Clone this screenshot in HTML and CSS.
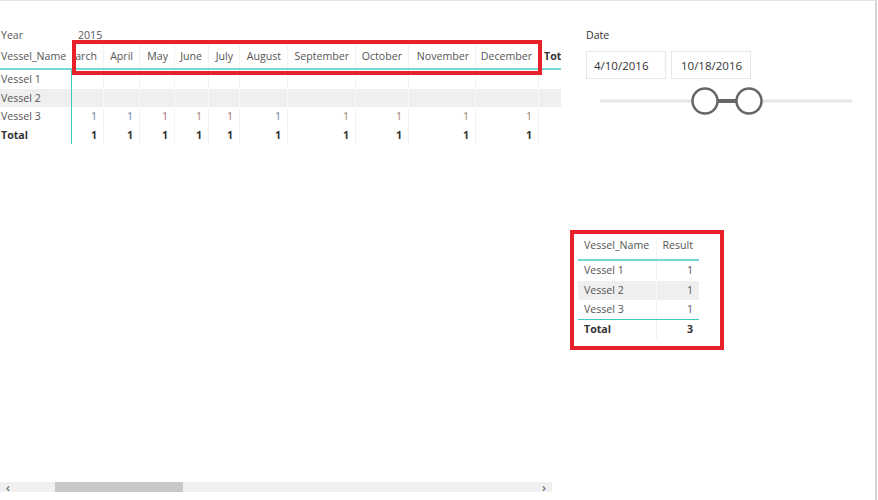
FILE: index.html
```html
<!DOCTYPE html>
<html>
<head>
<meta charset="utf-8">
<link rel="stylesheet" href="styles.css">
</head>
<body>
<div class="page">
  <div class="matrix-visual">
    <div class="matrix">
      <div class="year-row">
        <div class="c-label">Year</div>
        <div class="c-year">2015</div>
      </div>
      <div class="mrow head">
        <div class="cell label">Vessel_Name</div>
        <div class="cell num w1">March</div>
        <div class="cell num w2">April</div>
        <div class="cell num w3">May</div>
        <div class="cell num w4">June</div>
        <div class="cell num w5">July</div>
        <div class="cell num w6">August</div>
        <div class="cell num w7">September</div>
        <div class="cell num w8">October</div>
        <div class="cell num w9">November</div>
        <div class="cell num w10">December</div>
        <div class="cell tot">Total</div>
      </div>
      <div class="mrow body">
        <div class="cell label">Vessel 1</div>
        <div class="cell num w1"></div><div class="cell num w2"></div><div class="cell num w3"></div><div class="cell num w4"></div><div class="cell num w5"></div><div class="cell num w6"></div><div class="cell num w7"></div><div class="cell num w8"></div><div class="cell num w9"></div><div class="cell num w10"></div><div class="cell tot"></div>
      </div>
      <div class="mrow body alt">
        <div class="cell label">Vessel 2</div>
        <div class="cell num w1"></div><div class="cell num w2"></div><div class="cell num w3"></div><div class="cell num w4"></div><div class="cell num w5"></div><div class="cell num w6"></div><div class="cell num w7"></div><div class="cell num w8"></div><div class="cell num w9"></div><div class="cell num w10"></div><div class="cell tot"></div>
      </div>
      <div class="mrow body">
        <div class="cell label">Vessel 3</div>
        <div class="cell num w1 v-blue">1</div><div class="cell num w2 v-blue">1</div><div class="cell num w3 v-red">1</div><div class="cell num w4 v-brown">1</div><div class="cell num w5 v-red">1</div><div class="cell num w6 v-blue">1</div><div class="cell num w7 v-brown">1</div><div class="cell num w8 v-brown">1</div><div class="cell num w9 v-brown">1</div><div class="cell num w10 v-brown">1</div><div class="cell tot"></div>
      </div>
      <div class="mrow body total">
        <div class="cell label">Total</div>
        <div class="cell num w1">1</div><div class="cell num w2">1</div><div class="cell num w3">1</div><div class="cell num w4">1</div><div class="cell num w5">1</div><div class="cell num w6">1</div><div class="cell num w7">1</div><div class="cell num w8">1</div><div class="cell num w9">1</div><div class="cell num w10">1</div><div class="cell tot"></div>
      </div>
      <div class="highlight"></div>
    </div>
    <div class="hscroll">
      <span class="arrow">&lsaquo;</span>
      <div class="track"><div class="thumb"></div></div>
      <span class="arrow">&rsaquo;</span>
    </div>
  </div>

  <div class="side">
    <div class="slicer-title">Date</div>
    <div class="date-row">
      <div class="date-box">4/10/2016</div>
      <div class="date-box">10/18/2016</div>
    </div>
    <svg class="slider" width="260" height="30" viewBox="0 0 260 30">
      <line x1="4" y1="14" x2="256" y2="14" stroke="#e6e6e6" stroke-width="3"/>
      <line x1="109" y1="14" x2="153" y2="14" stroke="#666" stroke-width="4"/>
      <circle cx="109" cy="14" r="12.5" fill="#fff" stroke="#666" stroke-width="2.5"/>
      <circle cx="153" cy="14" r="12.5" fill="#fff" stroke="#666" stroke-width="2.5"/>
    </svg>

    <div class="result-box">
      <div class="rtable">
        <div class="rrow rhead"><div class="rc name">Vessel_Name</div><div class="rc val">Result</div></div>
        <div class="rrow"><div class="rc name">Vessel 1</div><div class="rc val">1</div></div>
        <div class="rrow ralt"><div class="rc name">Vessel 2</div><div class="rc val">1</div></div>
        <div class="rrow rlast"><div class="rc name">Vessel 3</div><div class="rc val">1</div></div>
        <div class="rrow rtotal"><div class="rc name">Total</div><div class="rc val">3</div></div>
      </div>
    </div>
  </div>
</div>
</body>
</html>
```

FILE: styles.css
```css
html, body {
  margin: 0;
  padding: 0;
  background: #fff;
}
body {
  font-family: "Open Sans", "Noto Sans", sans-serif;
  font-size: 10.6px;
  color: #444;
}
.page {
  width: 877px;
  height: 500px;
  box-sizing: border-box;
  border-top: 1px solid #e2e2e2;
  border-right: 2px solid #d4d4d4;
  display: flex;
  gap: 9px;
}
.matrix-visual {
  width: 561px;
  flex-shrink: 0;
  display: flex;
  flex-direction: column;
}
.matrix {
  position: relative;
  padding-top: 27px;
  width: 561px;
  overflow: hidden;
}
.year-row {
  display: flex;
  line-height: 15px;
  height: 15px;
  color: #555;
}
.c-label {
  width: 72px;
  padding-left: 1px;
  box-sizing: border-box;
}
.c-year {
  padding-left: 6px;
}
.mrow {
  display: flex;
  white-space: nowrap;
}
.cell {
  box-sizing: border-box;
  flex-shrink: 0;
  overflow: hidden;
  display: flex;
  align-items: center;
  border-right: 1px solid #f3f3f3;
}
.cell.label {
  width: 72px;
  padding-left: 1px;
  border-right: 1px solid #3ec8bf;
  color: #555;
}
.head .cell.label { border-right-color: transparent; }
.cell.num {
  justify-content: flex-end;
  padding-right: 6px;
}
.w1 { width: 32px; }
.w2 { width: 36px; }
.w3 { width: 35px; }
.w4 { width: 34px; }
.w5 { width: 31px; }
.w6 { width: 48px; }
.w7 { width: 68px; }
.w8 { width: 53px; }
.w9 { width: 67px; }
.w10 { width: 63px; }
.cell.tot {
  width: 40px;
  padding-left: 5px;
  border-right: none;
}
.head {
  height: 27px;
  border-bottom: 2px solid #76d9d2;
  box-sizing: border-box;
  color: #555;
}
.head .cell.tot { font-weight: bold; color: #333; }
.body {
  height: 18.5px;
}
.body .cell { line-height: 18px; }
.alt { background: #efefef; }
.alt .cell { border-right-color: #fafafa; }
.alt .cell.label { border-right-color: #3ec8bf; }
.v-blue { color: #6a7fa8; }
.v-red { color: #a07070; }
.v-brown { color: #9a8060; }
.total .cell { font-weight: bold; color: #333; }
.highlight {
  position: absolute;
  left: 72px;
  top: 39px;
  width: 470px;
  height: 35px;
  box-sizing: border-box;
  border: 4px solid #e8202a;
}
.hscroll {
  margin-top: auto;
  margin-bottom: 8px;
  width: 552px;
  height: 10px;
  background: #f0f0f0;
  display: flex;
  align-items: center;
}
.arrow {
  width: 16px;
  text-align: center;
  font-size: 13px;
  line-height: 10px;
  color: #555;
}
.track {
  flex: 1;
  height: 10px;
  position: relative;
}
.thumb {
  margin-left: 39px;
  width: 128px;
  height: 10px;
  background: #c8c8c8;
}
.side {
  display: flex;
  flex-direction: column;
  align-items: flex-start;
}
.slicer-title {
  margin-top: 27px;
  padding-left: 16px;
  line-height: 15px;
  color: #333;
}
.date-row {
  display: flex;
  gap: 5px;
  margin-top: 8px;
  padding-left: 16px;
}
.date-box {
  width: 80px;
  height: 28px;
  box-sizing: border-box;
  border: 1px solid #e6e6e6;
  display: flex;
  align-items: center;
  padding-left: 7px;
  color: #333;
  font-size: 11.5px;
}
.date-box + .date-box { padding-left: 9px; }
.slider {
  display: block;
  margin-top: 8px;
  margin-left: 26px;
}
.result-box {
  margin-top: 113px;
  width: 154px;
  height: 120px;
  box-sizing: border-box;
  border: 4px solid #e8202a;
  padding: 4px 21px 0 4px;
}
.rtable { width: 121px; }
.rrow {
  display: flex;
  height: 19.5px;
  line-height: 19.5px;
  color: #555;
}
.rc { box-sizing: border-box; }
.rc.name { width: 79px; padding-left: 6px; border-right: 1px solid #f3f3f3; }
.rc.val { width: 42px; text-align: right; padding-right: 6px; }
.rhead {
  height: 23px;
  line-height: 15px;
  border-bottom: 2px solid #76d9d2;
  box-sizing: border-box;
}
.ralt { background: #efefef; }
.ralt .rc.name { border-right-color: #fafafa; }
.rlast { border-bottom: 1px solid #3ec8bf; box-sizing: border-box; height: 20px; }
.rtotal { font-weight: bold; color: #333; }
```
